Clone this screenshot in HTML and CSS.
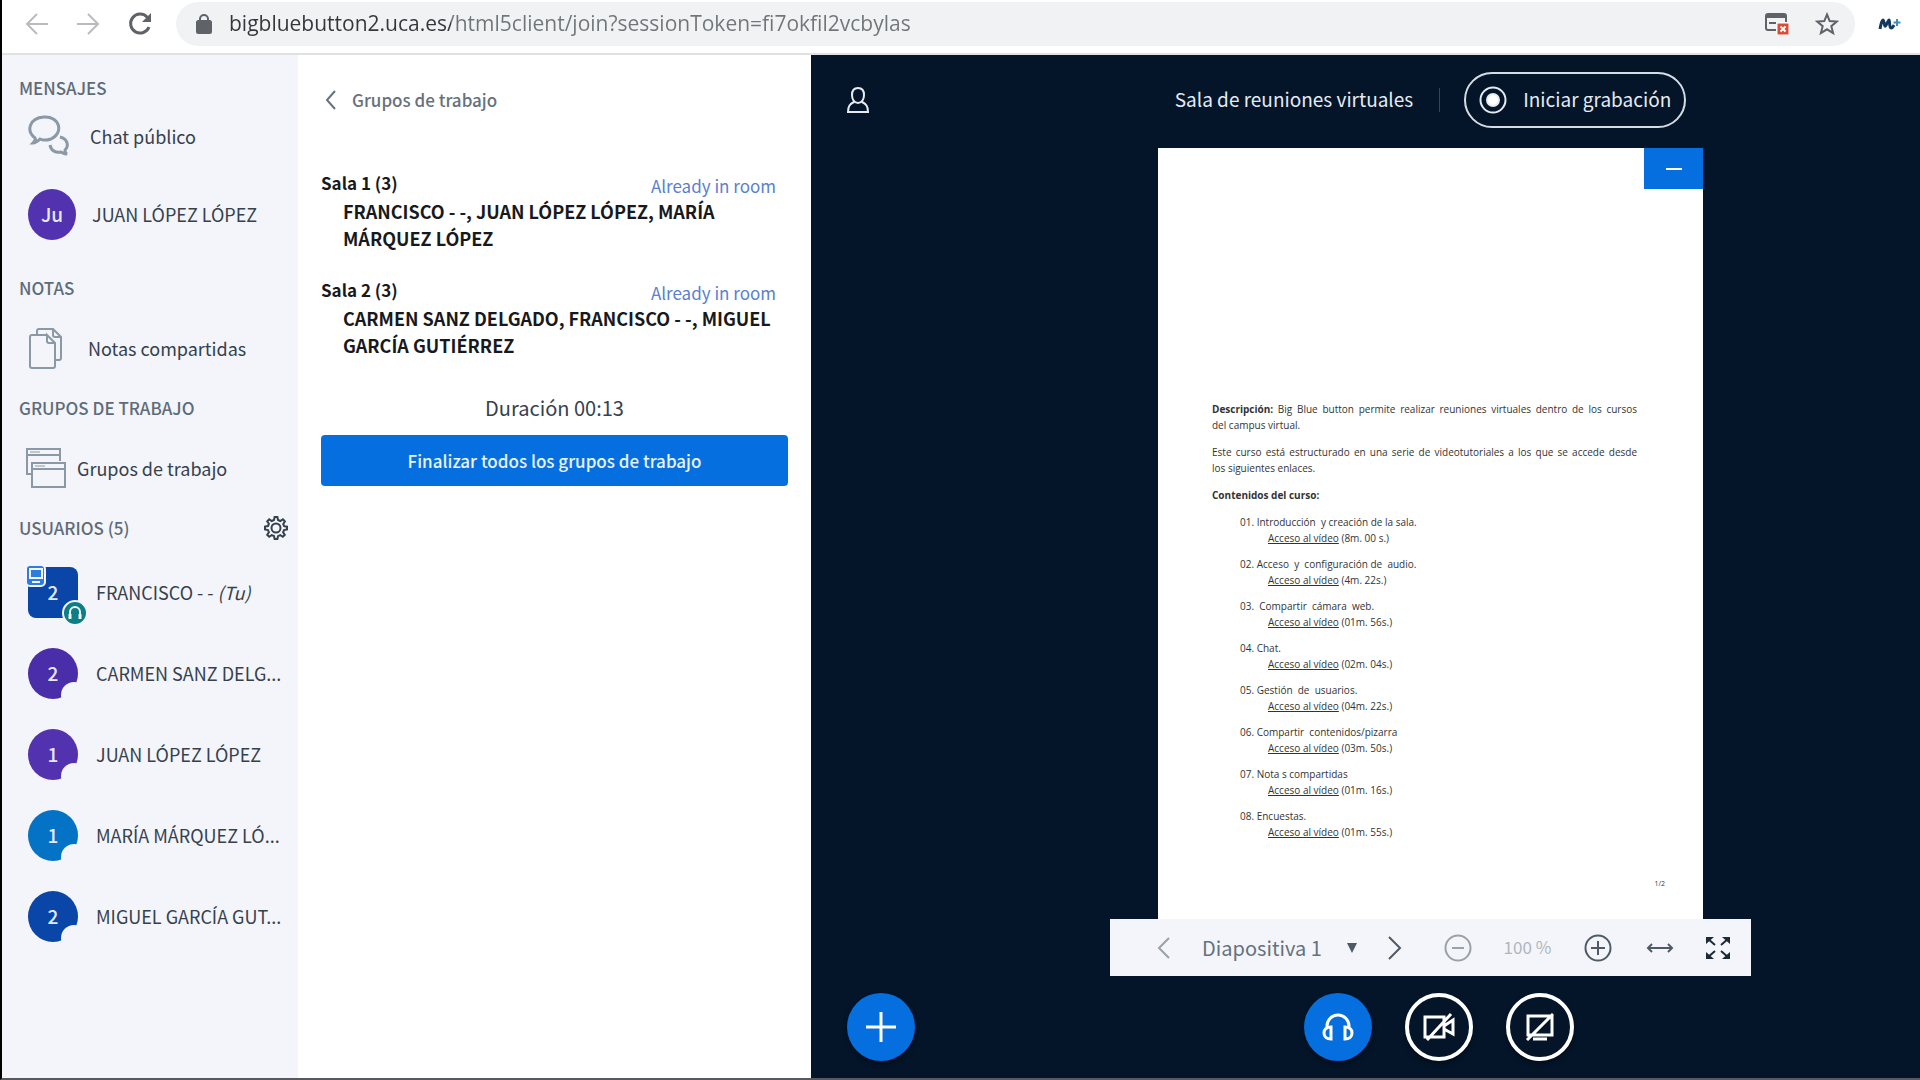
FILE: index.html
```html
<!DOCTYPE html>
<html lang="es">
<head>
  <meta charset="UTF-8">
  <meta name="viewport" content="width=device-width, initial-scale=1.0">
  <title>Sala de reuniones virtuales</title>
  <link rel="stylesheet" href="styles.css">
</head>
<body>
  <header class="browser">
    <button class="nav-btn off" aria-label="Atrás">
      <svg width="24" height="24" viewBox="0 0 24 24"><path d="M23 12H3M12 2L2 12l10 10"/></svg>
    </button>
    <button class="nav-btn off" aria-label="Adelante">
      <svg width="24" height="24" viewBox="0 0 24 24"><path d="M1 12h20M12 2l10 10-10 10"/></svg>
    </button>
    <button class="nav-btn reload" aria-label="Recargar">
      <svg width="26" height="26" viewBox="0 0 26 26"><path d="M22 16a9.500 9.500 0 1 1-2-10l3 3"/><path class="fill" d="M24 2v9h-9z"/></svg>
    </button>
    <div class="omnibox">
      <svg class="lock" width="16" height="20" viewBox="0 0 16 20"><rect x="1" y="7" width="14" height="12" rx="1.500"/><path d="M4 8V5a4 4 0 0 1 8 0v3"/></svg>
      <input class="url" type="text" aria-label="Dirección" value="bigbluebutton2.uca.es/html5client/join?sessionToken=fi7okfil2vcbylas">
      <button class="nav-btn" aria-label="Ventanas emergentes bloqueadas">
        <svg width="26" height="24" viewBox="0 0 26 24"><path d="M12 18H4a2 2 0 0 1-2-2V4a2 2 0 0 1 2-2h16a2 2 0 0 1 2 2v6"/><path d="M2 4h20" stroke-width="4"/><path d="M5 11h7"/><rect class="pop-bad" x="13" y="11" width="12" height="12" rx="1"/><path class="pop-x" d="M16.500 14.500l5 5m0-5l-5 5"/></svg>
      </button>
      <button class="nav-btn star" aria-label="Marcador">
        <svg width="24" height="24" viewBox="0 0 24 24"><path d="M12 2.500l2.700 6.600 7.100.5-5.500 4.600 1.800 6.900-6.100-3.800-6.100 3.800 1.800-6.900L2.200 9.600l7.100-.5z"/></svg>
      </button>
    </div>
    <svg class="movistar" width="24" height="14" viewBox="0 0 24 14"><path d="M2 12C3 6 4 3 5 3s1 5 2 6 3-6 4-6 0 8 2 8 2-1 3-3"/><path class="cyan" d="M19 2v7M15.500 5.500h7"/></svg>
  </header>

  <div class="app">
    <nav class="sidebar">
      <section class="side-section messages">
        <h2>MENSAJES</h2>
        <a class="side-item" href="#">
          <svg class="side-icon" width="42" height="42" viewBox="0 0 42 42"><path d="M7 23C-2 16 1 3 16 2c16-1 20 16 7 22-3 1-7 2-11 0-2 2-4 4-7 4 2-2 3-3 2-5z"/><path d="M32 22c8 2 9 9 5 13 0 2 0 3 2 4-3 0-4-1-6-2-5 1-10-1-11-7"/></svg>
          Chat público
        </a>
        <a class="side-item" href="#">
          <span class="avatar violet small">Ju</span>
          JUAN LÓPEZ LÓPEZ
        </a>
      </section>
      <section class="side-section">
        <h2>NOTAS</h2>
        <a class="side-item notes" href="#">
          <svg class="side-icon" width="36" height="42" viewBox="0 0 36 42"><path d="M9 7V4a2 2 0 0 1 2-2h14l8 8v21a2 2 0 0 1-2 2h-4M25 2v6a2 2 0 0 0 2 2h6"/><path d="M18 8H4a2 2 0 0 0-2 2v29a2 2 0 0 0 2 2h21a2 2 0 0 0 2-2V16l-8-8v6a2 2 0 0 0 2 2h6"/></svg>
          Notas compartidas
        </a>
      </section>
      <section class="side-section">
        <h2>GRUPOS DE TRABAJO</h2>
        <a class="side-item groups" href="#">
          <svg class="side-icon" width="42" height="42" viewBox="0 0 42 42"><path d="M35 14V2H2v25h4M2 8h33"/><path d="M7 16h33v24H7zM7 22h33"/><path stroke-width="1" d="M5 5h10M10 19h10"/></svg>
          Grupos de trabajo
        </a>
      </section>
      <section class="side-section">
        <div class="side-head">
          <h2>USUARIOS (5)</h2>
          <button class="gear" aria-label="Gestionar usuarios">
            <svg width="24" height="24" viewBox="0 0 24 24"><circle cx="12" cy="12" r="4.500"/><path d="M10 4l.6-3h2.800l.6 3 2.300 1 2.600-1.700 2 2L19.200 8l.9 2.200 2.900.5v2.800l-3 .6-.9 2.200 1.700 2.500-2 2-2.500-1.700-2.300 1-.6 2.900h-2.800l-.6-3-2.300-.9-2.500 1.700-2-2L4.900 16.300 4 14l-3-.6v-2.800l3-.6.9-2.200-1.700-2.500 2-2L7.700 5z"/></svg>
          </button>
        </div>
        <ul class="users">
          <li>
            <span class="avatar navy moderator">2
              <svg class="presenter" width="21" height="23" viewBox="0 0 21 23"><rect x="1" y="1" width="19" height="21" rx="4"/><path d="M5 5h12v9H5zM7 18h8"/></svg>
              <svg class="listening" width="26" height="26" viewBox="0 0 26 26"><circle cx="13" cy="13" r="12"/><path d="M8 15v-3a5 5 0 0 1 10 0v3"/><path d="M8 14v5M18 14v5" stroke-width="3"/></svg>
            </span>
            <span class="name">FRANCISCO - - <em>(Tu)</em></span>
          </li>
          <li><span class="avatar purple cut">2</span><span class="name">CARMEN SANZ DELG...</span></li>
          <li><span class="avatar violet cut">1</span><span class="name">JUAN LÓPEZ LÓPEZ</span></li>
          <li><span class="avatar blue cut">1</span><span class="name">MARÍA MÁRQUEZ LÓ...</span></li>
          <li><span class="avatar navy cut">2</span><span class="name">MIGUEL GARCÍA GUT...</span></li>
        </ul>
      </section>
    </nav>

    <section class="panel">
      <button class="back">
        <svg width="12" height="20" viewBox="0 0 12 20"><path d="M10 1L2 10l8 9"/></svg>
        Grupos de trabajo
      </button>
      <div class="room">
        <div class="room-head">
          <h3>Sala 1 (3)</h3>
          <span class="joined">Already in room</span>
        </div>
        <p>FRANCISCO - -, JUAN LÓPEZ LÓPEZ, MARÍA MÁRQUEZ LÓPEZ</p>
      </div>
      <div class="room">
        <div class="room-head">
          <h3>Sala 2 (3)</h3>
          <span class="joined">Already in room</span>
        </div>
        <p>CARMEN SANZ DELGADO, FRANCISCO - -, MIGUEL GARCÍA GUTIÉRREZ</p>
      </div>
      <p class="duration">Duración 00:13</p>
      <button class="end-all">Finalizar todos los grupos de trabajo</button>
    </section>

    <main class="meeting">
      <div class="topbar">
        <button class="toggle-users" aria-label="Usuarios">
          <svg width="26" height="28" viewBox="0 0 26 28"><path d="M13 2c4 0 6 3 6 7s-2 8-6 8-6-4-6-8 2-7 6-7zM9 16c-4 2-6 4-6 10h20c0-6-2-8-6-10"/></svg>
        </button>
        <div class="topbar-center">
          <h1>Sala de reuniones virtuales</h1>
          <span class="divider"></span>
          <button class="record">
            <svg width="28" height="28" viewBox="0 0 28 28"><circle cx="14" cy="14" r="12.500"/><circle class="dot" cx="14" cy="14" r="6"/></svg>
            <span>Iniciar grabación</span>
          </button>
        </div>
      </div>

      <div class="stage">
        <article class="slide">
          <button class="minimize" aria-label="Minimizar"><svg width="16" height="4" viewBox="0 0 16 4"><path d="M0 2h16"/></svg></button>
          <p><span class="line"><strong>Descripción:</strong> Big Blue button permite realizar reuniones virtuales dentro de los cursos</span> del campus virtual.</p>
          <p><span class="line">Este curso está estructurado en una serie de videotutoriales a los que se accede desde</span> los siguientes enlaces.</p>
          <p><strong>Contenidos del curso:</strong></p>
          <ul class="contents">
            <li>01. Introducción&nbsp; y creación de la sala.<div><a href="#">Acceso al vídeo</a> (8m. 00 s.)</div></li>
            <li>02. Acceso&nbsp; y&nbsp; configuración de&nbsp; audio.<div><a href="#">Acceso al vídeo</a> (4m. 22s.)</div></li>
            <li>03.&nbsp; Compartir&nbsp; cámara&nbsp; web.<div><a href="#">Acceso al vídeo</a> (01m. 56s.)</div></li>
            <li>04. Chat.<div><a href="#">Acceso al vídeo</a> (02m. 04s.)</div></li>
            <li>05. Gestión&nbsp; de&nbsp; usuarios.<div><a href="#">Acceso al vídeo</a> (04m. 22s.)</div></li>
            <li>06. Compartir&nbsp; contenidos/pizarra<div><a href="#">Acceso al vídeo</a> (03m. 50s.)</div></li>
            <li>07. Nota s compartidas<div><a href="#">Acceso al vídeo</a> (01m. 16s.)</div></li>
            <li>08. Encuestas.<div><a href="#">Acceso al vídeo</a> (01m. 55s.)</div></li>
          </ul>
          <footer>1/2</footer>
        </article>
      </div>

      <div class="toolbar">
        <div class="tools">
          <button class="tool off" aria-label="Anterior"><svg width="28" height="28" viewBox="0 0 28 28"><path d="M19 4L9 14l10 10"/></svg></button>
          <div class="slide-picker">
            <select aria-label="Diapositiva">
              <option>Diapositiva 1</option>
              <option>Diapositiva 2</option>
            </select>
            <svg width="10" height="10" viewBox="0 0 10 10"><path d="M0 0h10L5 10z"/></svg>
          </div>
          <button class="tool" aria-label="Siguiente"><svg width="28" height="28" viewBox="0 0 28 28"><path d="M8 3l11 11L8 25"/></svg></button>
        </div>
        <div class="tools">
          <button class="tool off" aria-label="Reducir"><svg width="28" height="28" viewBox="0 0 28 28"><circle cx="14" cy="14" r="12.500"/><path d="M8 14h12"/></svg></button>
          <span class="zoom">100 %</span>
          <button class="tool" aria-label="Ampliar"><svg width="28" height="28" viewBox="0 0 28 28"><circle cx="14" cy="14" r="12.500"/><path d="M7 14h14M14 7v14"/></svg></button>
        </div>
        <div class="tools wide">
          <button class="tool" aria-label="Ajustar al ancho"><svg width="28" height="28" viewBox="0 0 28 28"><path d="M2 14h24M6 10l-4 4 4 4M22 10l4 4-4 4"/></svg></button>
          <button class="tool dark" aria-label="Pantalla completa"><svg width="28" height="28" viewBox="0 0 28 28"><path d="M3 4l8 7M25 4l-8 7M3 24l8-7M25 24l-8-7"/><path class="fill" d="M2 3h8l-8 7zM26 3h-8l8 7zM2 25h8l-8-7zM26 25h-8l8-7z"/></svg></button>
        </div>
      </div>

      <div class="actions">
        <button class="round primary" aria-label="Acciones"><svg width="32" height="32" viewBox="0 0 32 32"><path d="M1 16h30M16 1v30"/></svg></button>
        <div class="media">
          <button class="round primary" aria-label="Audio"><svg width="32" height="28" viewBox="0 0 32 28"><path d="M5 15v-2a11 11 0 0 1 22 0v2M9 14v12c-4 0-7-2-7-6s3-6 7-6zM23 14v12c4 0 7-2 7-6s-3-6-7-6z"/></svg></button>
          <button class="round" aria-label="Compartir cámara"><svg width="32" height="28" viewBox="0 0 32 28"><path d="M2 4h19v20H2zM21 13l9-6v14l-9-5M4 27L28 1"/></svg></button>
          <button class="round" aria-label="Compartir pantalla"><svg width="32" height="28" viewBox="0 0 32 28"><path d="M4 3h24v19H4zM9 26h14M3 27L29 1"/></svg></button>
        </div>
      </div>
    </main>
  </div>
</body>
</html>
```
FILE: styles.css
```css
* {
  box-sizing: border-box;
}
body {
  margin: 0;
  height: 100vh;
  display: flex;
  flex-direction: column;
  border-left: 2px solid #000;
  border-bottom: 2px solid #56595f;
  font-family: "Noto Sans CJK SC", "Noto Sans", sans-serif;
  font-size: 17px;
  line-height: 27px;
  color: #36414e;
  background: #fff;
  overflow: hidden;
}
h1, h2, h3, p, ul {
  margin: 0;
  padding: 0;
  font-weight: 400;
}
ul {
  list-style: none;
}
a {
  color: inherit;
  text-decoration: none;
}
button, input, select {
  font: inherit;
  color: inherit;
  border: none;
  background: none;
  padding: 0;
}
button {
  cursor: pointer;
}
svg {
  display: block;
  flex: none;
  fill: none;
  stroke: currentColor;
  stroke-width: 2;
}
.fill {
  fill: currentColor;
  stroke: none;
}

/* browser bar */
.browser {
  flex: none;
  height: 55px;
  display: flex;
  align-items: center;
  gap: 27px;
  padding: 0 18px 6px 23px;
  border-bottom: 2px solid #dfe1e4;
}
.nav-btn {
  color: #5f6368;
}
.nav-btn.off {
  color: #b9bbbe;
}
.reload svg {
  stroke-width: 3;
}
.omnibox {
  flex: 1;
  height: 44px;
  margin: 0 -4px;
  padding: 0 16px 0 20px;
  display: flex;
  align-items: center;
  gap: 17px;
  border-radius: 22px;
  background: #f0f2f4;
}
.lock {
  color: #5f6368;
}
.lock rect {
  fill: currentColor;
}
.url {
  flex: 1;
  font-family: "Open Sans", sans-serif;
  font-size: 21px;
  color: #5f6368;
  -webkit-text-fill-color: transparent;
  background: linear-gradient(90deg, #33373b 222px, #70757a 222px);
  -webkit-background-clip: text;
  background-clip: text;
}
.pop-bad {
  fill: #dc4b33;
  stroke: #fff;
  stroke-width: 1;
}
.pop-x {
  stroke: #fff;
}
.star {
  margin-left: 8px;
}
.movistar {
  color: #12395e;
  stroke-width: 3;
}
.cyan {
  stroke: #3d8fc0;
  stroke-width: 2;
}

.app {
  flex: 1;
  min-height: 0;
  display: flex;
}

/* left sidebar */
.sidebar {
  flex: none;
  width: 296px;
  padding: 17px 8px 0 17px;
  display: flex;
  flex-direction: column;
  gap: 12px;
  font-size: 18px;
  background: #f3f5fa;
}
.side-section h2 {
  font-size: 17px;
  line-height: 32px;
  font-weight: 500;
  color: #5f6b78;
}
.side-item {
  height: 64px;
  margin: 12px 0 0 9px;
  display: flex;
  align-items: center;
  gap: 20px;
}
.messages {
  padding-bottom: 14px;
}
.messages h2 + .side-item {
  margin-top: 0;
}
.messages .side-item + .side-item {
  margin-top: 14px;
}
.side-icon {
  color: #8b98a6;
}
.messages .side-icon {
  stroke-width: 3;
}
.notes {
  gap: 24px;
}
.groups {
  margin-left: 6px;
  gap: 10px;
}
.side-head {
  display: flex;
  align-items: center;
  justify-content: space-between;
}
.gear {
  margin-right: 2px;
}
.users {
  padding-top: 8px;
}
.users li {
  height: 81px;
  padding-left: 9px;
  display: flex;
  align-items: center;
  gap: 18px;
}
.name {
  white-space: nowrap;
}
.avatar {
  flex: none;
  position: relative;
  width: 50px;
  height: 51px;
  border-radius: 50%;
  text-align: center;
  font-weight: 500;
  font-size: 19px;
  line-height: 50px;
  color: #e4e9ff;
}
.avatar.small {
  width: 48px;
  margin-right: -4px;
}
.violet {
  background: #5232ae;
}
.purple {
  background: #4a2da8;
}
.blue {
  background: #0573c5;
}
.navy {
  background: #0a46a8;
}
.moderator {
  border-radius: 8px;
}
.cut::after {
  content: "";
  position: absolute;
  right: -9px;
  bottom: -9px;
  width: 26px;
  height: 26px;
  border-radius: 50%;
  background: #f3f5fa;
}
.presenter {
  position: absolute;
  left: -3px;
  top: -3px;
  stroke: #f3f5fa;
}
.presenter rect {
  fill: #2b7de0;
}
.listening {
  position: absolute;
  right: -10px;
  bottom: -8px;
  stroke: #f3f5fa;
}
.listening circle {
  fill: #0c7f86;
}

/* breakout rooms panel */
.panel {
  flex: none;
  width: 513px;
  padding: 31px 23px 0 23px;
  background: #fff;
}
.back {
  display: flex;
  align-items: center;
  gap: 15px;
  margin: 0 0 56px 4px;
  font-weight: 500;
  color: #66717d;
}
.room {
  margin-bottom: 24px;
  color: #17191d;
}
.room-head {
  display: flex;
  justify-content: space-between;
  height: 29px;
}
.room-head h3, .room p {
  font-size: 18px;
  font-weight: 700;
}
.room-head h3 {
  font-size: 17px;
}
.room p {
  padding-left: 22px;
}
.joined {
  padding: 3px 12px 0 0;
  color: #5a80d0;
}
.duration {
  margin: 35px 0 14px;
  text-align: center;
  font-size: 20px;
}
.end-all {
  width: 100%;
  height: 51px;
  border-radius: 4px;
  font-weight: 500;
  color: #e8f3ff;
  background: #066fe0;
}

/* meeting area */
.meeting {
  flex: 1;
  display: flex;
  flex-direction: column;
  color: #e6ebf0;
  background: #04152a;
}
.topbar, .actions {
  flex: none;
  display: grid;
  grid-template-columns: 130px 1fr;
  align-items: center;
}
.topbar {
  height: 93px;
  padding-bottom: 3px;
}
.toggle-users {
  margin-left: 34px;
  justify-self: start;
}
.topbar-center {
  display: flex;
  justify-content: center;
  align-items: center;
}
.topbar h1, .record span {
  padding-bottom: 3px;
  font-size: 19px;
}
.divider {
  width: 1px;
  height: 24px;
  margin: 0 24px 0 26px;
  background: #34445a;
}
.record {
  height: 56px;
  padding: 0 13px;
  display: flex;
  align-items: center;
  gap: 16px;
  border: 2px solid #d6dce3;
  border-radius: 28px;
}
.dot {
  fill: #fff;
}
.stage {
  flex: 1;
  min-height: 0;
  margin-left: 130px;
  display: flex;
  justify-content: center;
}
.slide {
  position: relative;
  height: 100%;
  aspect-ratio: 545 / 771;
  padding: 253px 66px 0 54px;
  font-family: "Open Sans", sans-serif;
  font-size: 10px;
  line-height: 16px;
  color: #333;
  background: #fff;
}
.slide p {
  margin-bottom: 11px;
}
.line {
  display: block;
  text-align: justify;
  text-align-last: justify;
}
.minimize {
  position: absolute;
  top: 0;
  right: 0;
  width: 59px;
  height: 41px;
  display: flex;
  align-items: center;
  justify-content: center;
  color: #fff;
  background: #066fe0;
}
.contents li {
  margin-bottom: 10px;
  padding-left: 28px;
}
.contents div {
  padding-left: 28px;
}
.contents a {
  text-decoration: underline;
}
.slide footer {
  margin: 36px -28px 0 0;
  text-align: right;
  font-size: 7px;
}
.toolbar {
  flex: none;
  align-self: center;
  width: 641px;
  height: 57px;
  margin-left: 130px;
  padding: 0 19px 0 40px;
  display: flex;
  align-items: center;
  justify-content: space-between;
  color: #4e5a66;
  background: #f3f5fa;
}
.tools {
  display: flex;
  align-items: center;
  gap: 24px;
}
.tools.wide {
  gap: 30px;
}
.tool.off {
  color: #9aa1a9;
}
.tool.dark {
  color: #1e2a36;
}
.zoom {
  width: 64px;
  padding-bottom: 3px;
  text-align: center;
  color: #b0b6bd;
}
.slide-picker {
  position: relative;
  width: 155px;
}
.slide-picker select {
  width: 100%;
  appearance: none;
  font-size: 20px;
  color: #66717d;
}
.slide-picker svg {
  position: absolute;
  right: 0;
  top: 9px;
  fill: currentColor;
  stroke: none;
  pointer-events: none;
}
.actions {
  height: 102px;
}
.actions > .round {
  margin-left: 36px;
}
.media {
  display: flex;
  justify-content: center;
  gap: 33px;
  padding-left: 16px;
}
.round {
  width: 68px;
  height: 68px;
  display: flex;
  align-items: center;
  justify-content: center;
  border: 4px solid #fff;
  border-radius: 50%;
  color: #fff;
  box-shadow: 0 3px 5px rgba(0, 0, 0, 0.4);
}
.round svg {
  stroke-width: 3;
}
.round.primary {
  border: none;
  background: #066fe0;
}
```
